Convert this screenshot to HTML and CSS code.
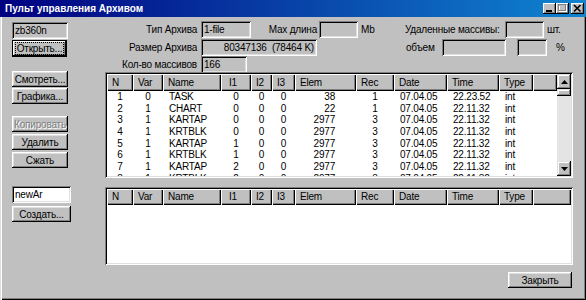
FILE: index.html
```html
<!DOCTYPE html>
<html lang="ru">
<head>
    <meta charset="UTF-8">
    <title>Пульт управления Архивом</title>
    <link rel="stylesheet" href="styles.css">
</head>
<body>
    <div class="window">
        <div class="titlebar">
            <span class="title">Пульт управления Архивом</span>
            <div class="caption-btns">
                <span class="cbtn"><svg width="13" height="11" viewBox="0 0 13 11"><rect x="3" y="7" width="6" height="2" fill="#000"/></svg></span>
                <span class="cbtn"><svg width="13" height="11" viewBox="0 0 13 11"><rect x="3.5" y="2.5" width="7" height="6" fill="none" stroke="#fff"/><rect x="2.5" y="1.5" width="7" height="6" fill="none" stroke="#808080"/><rect x="2" y="1" width="8" height="1.5" fill="#808080"/></svg></span>
                <span class="cbtn close"><svg width="13" height="11" viewBox="0 0 13 11"><path d="M3 2 L9.5 8.5 M9.5 2 L3 8.5" stroke="#000" stroke-width="1.6"/></svg></span>
            </div>
        </div>

        <div class="client">
            <div class="side">
                <div class="field w56">zb360n</div>
                <button class="btn default w55 mt1"><span class="focus">Открыть...</span></button>

                <button class="btn w56 mt14">Смотреть...</button>
                <button class="btn w56 mt1">Графика...</button>

                <button class="btn w56 mt12 disabled">Копировать</button>
                <button class="btn w56 mt2">Удалить</button>
                <button class="btn w56 mt2">Сжать</button>

                <div class="field edit w59 mt18">newAr</div>
                <button class="btn w59 mt3">Создать...</button>
            </div>

            <div class="main">
                <div class="info">
                    <div class="info-row">
                        <span class="lbl">Тип Архива</span>
                        <span class="field w50">1-file</span>
                        <span class="lbl lbl-max">Max длина</span>
                        <span class="field w39"></span>
                        <span class="unit unit-mb">Mb</span>
                        <span class="lbl-del">Удаленные массивы:</span>
                        <span class="field w39"></span>
                        <span class="unit">шт.</span>
                    </div>
                    <div class="info-row mt1">
                        <span class="lbl">Размер Архива</span>
                        <span class="field right w116">80347136 &nbsp;(78464 K)</span>
                        <span class="lbl-vol">объем</span>
                        <span class="field w64"></span>
                        <span class="field w30 gap11"></span>
                        <span class="unit pct">%</span>
                    </div>
                    <div class="info-row short">
                        <span class="lbl">Кол-во массивов</span>
                        <span class="field w46">166</span>
                    </div>
                </div>

                <div class="listbox upper">
                    <div class="gridview">
                        <div class="row head"><span>N</span><span>Var</span><span>Name</span><span>I1</span><span>I2</span><span>I3</span><span>Elem</span><span>Rec</span><span>Date</span><span>Time</span><span>Type</span><span></span></div>
                        <div class="row"><span>1</span><span>0</span><span>TASK</span><span>0</span><span>0</span><span>0</span><span>38</span><span>1</span><span>07.04.05</span><span>22.23.52</span><span>int</span><span></span></div>
                        <div class="row"><span>2</span><span>1</span><span>CHART</span><span>0</span><span>0</span><span>0</span><span>22</span><span>1</span><span>07.04.05</span><span>22.11.32</span><span>int</span><span></span></div>
                        <div class="row"><span>3</span><span>1</span><span>KARTAP</span><span>0</span><span>0</span><span>0</span><span>2977</span><span>3</span><span>07.04.05</span><span>22.11.32</span><span>int</span><span></span></div>
                        <div class="row"><span>4</span><span>1</span><span>KRTBLK</span><span>0</span><span>0</span><span>0</span><span>2977</span><span>3</span><span>07.04.05</span><span>22.11.32</span><span>int</span><span></span></div>
                        <div class="row"><span>5</span><span>1</span><span>KARTAP</span><span>1</span><span>0</span><span>0</span><span>2977</span><span>3</span><span>07.04.05</span><span>22.11.32</span><span>int</span><span></span></div>
                        <div class="row"><span>6</span><span>1</span><span>KRTBLK</span><span>1</span><span>0</span><span>0</span><span>2977</span><span>3</span><span>07.04.05</span><span>22.11.32</span><span>int</span><span></span></div>
                        <div class="row"><span>7</span><span>1</span><span>KARTAP</span><span>2</span><span>0</span><span>0</span><span>2977</span><span>3</span><span>07.04.05</span><span>22.11.32</span><span>int</span><span></span></div>
                        <div class="row"><span>8</span><span>1</span><span>KRTBLK</span><span>2</span><span>0</span><span>0</span><span>2977</span><span>3</span><span>07.04.05</span><span>22.11.32</span><span>int</span><span></span></div>
                    </div>
                    <div class="vscroll">
                        <div class="sbtn"><svg width="7" height="4" viewBox="0 0 7 4"><path d="M3.5 0 L7 4 L0 4 Z" fill="#000"/></svg></div>
                        <div class="thumb"></div>
                        <div class="track"></div>
                        <div class="sbtn"><svg width="7" height="4" viewBox="0 0 7 4"><path d="M0 0 L7 0 L3.5 4 Z" fill="#000"/></svg></div>
                    </div>
                </div>

                <div class="listbox lower">
                    <div class="gridview">
                        <div class="row head wide"><span>N</span><span>Var</span><span>Name</span><span>I1</span><span>I2</span><span>I3</span><span>Elem</span><span>Rec</span><span>Date</span><span>Time</span><span>Type</span><span></span></div>
                    </div>
                </div>

                <div class="footer">
                    <button class="btn w64">Закрыть</button>
                </div>
            </div>
        </div>
    </div>
</body>
</html>
```

FILE: styles.css
```css
body {
    margin: 0;
    background: #c0c0c0;
    font-family: "Liberation Sans", Arial, sans-serif;
    font-size: 10px;
    letter-spacing: -0.2px;
    color: #000;
}

/* window frame */
.window {
    width: 586px;
    height: 300px;
    box-sizing: border-box;
    background: #c0c0c0;
    box-shadow: inset 1px 0 #dfdfdf, inset 2px 0 #fff, inset -1px -1px #000, inset -2px -2px #808080;
    display: flex;
    flex-direction: column;
}
.titlebar {
    height: 17px;
    display: flex;
    align-items: center;
    justify-content: space-between;
    padding: 0 2px 0 5px;
    background: linear-gradient(90deg, #000080, #1084d0);
}
.title {
    color: #fff;
    font-weight: bold;
    letter-spacing: 0;
}
.caption-btns {
    display: flex;
}
.cbtn {
    width: 13px;
    height: 11px;
    display: flex;
    background: #c0c0c0;
    box-shadow: inset -1px -1px #000, inset 1px 1px #fff, inset -2px -2px #808080;
}
.cbtn.close {
    margin-left: 2px;
}

.client {
    flex: 1;
    display: flex;
    padding-left: 12px;
}

/* common controls */
.btn {
    height: 16px;
    padding: 0;
    border: none;
    background: #c0c0c0;
    font: inherit;
    letter-spacing: inherit;
    color: #000;
    display: flex;
    align-items: center;
    justify-content: center;
    box-shadow: inset -1px -1px #000, inset 1px 1px #fff, inset -2px -2px #808080, inset 2px 2px #dfdfdf;
}
.btn.default {
    height: 17px;
    box-shadow: inset 0 0 0 1px #000, inset -2px -2px #000, inset 2px 2px #fff, inset -3px -3px #808080;
}
.btn .focus {
    outline: 1px dotted #000;
    outline-offset: 0;
    padding: 0 1px;
    line-height: 11px;
}
.btn.disabled {
    color: #808080;
    text-shadow: 1px 1px #fff;
}
.field {
    height: 17px;
    box-sizing: border-box;
    padding: 0 3px;
    display: flex;
    align-items: center;
    white-space: nowrap;
    background: #c0c0c0;
    box-shadow: inset 1px 1px #808080, inset -1px -1px #fff, inset 2px 2px #000, inset -2px -2px #dfdfdf;
}
.field.edit {
    background: #fff;
}
.field.right {
    justify-content: flex-end;
}

.w30 { width: 30px; }
.w39 { width: 39px; }
.w46 { width: 46px; }
.w50 { width: 50px; }
.w55 { width: 55px; }
.w56 { width: 56px; }
.w59 { width: 59px; }
.w64 { width: 64px; }
.w116 { width: 116px; }
.mt1 { margin-top: 1px; }
.mt2 { margin-top: 2px; }
.mt3 { margin-top: 3px; }
.mt12 { margin-top: 12px; }
.mt14 { margin-top: 14px; }
.mt18 { margin-top: 18px; }

/* left column */
.side {
    width: 60px;
    display: flex;
    flex-direction: column;
    padding-top: 5px;
}

/* right column */
.main {
    width: 468px;
    margin-left: 33px;
    display: flex;
    flex-direction: column;
}
.info {
    padding-top: 4px;
    display: flex;
    flex-direction: column;
}
.info-row {
    height: 17px;
    display: flex;
    align-items: center;
}
.info-row.short {
    height: 16px;
}
.lbl {
    width: 92px;
    margin-right: 4px;
    text-align: right;
    white-space: nowrap;
}
.lbl-max {
    width: 50px;
    margin: 0 2px 0 16px;
}
.unit {
    margin-left: 3px;
}
.unit-mb {
    width: 44px;
}
.lbl-del {
    width: 100px;
    white-space: nowrap;
}
.lbl-vol {
    width: 36px;
    margin-left: 89px;
}
.gap11 {
    margin-left: 11px;
}
.pct {
    margin-left: 9px;
}

/* string grids */
.listbox {
    padding: 2px;
    display: flex;
    background: #fff;
    box-shadow: inset 1px 1px #808080, inset -1px -1px #fff, inset 2px 2px #000, inset -2px -2px #dfdfdf;
}
.listbox.upper {
    height: 106px;
    box-sizing: border-box;
}
.listbox.lower {
    height: 78px;
    box-sizing: border-box;
    margin-top: 9px;
}
.gridview {
    flex: 1;
    overflow: hidden;
}
.row {
    display: grid;
    grid-template-columns: 26px 30px 58px 30px 21px 23px 61px 38px 53px 52px 34px 24px;
    height: 11.67px;
    line-height: 11.67px;
    white-space: nowrap;
}
.row span {
    overflow: hidden;
}
.row span:nth-child(1),
.row span:nth-child(2),
.row span:nth-child(4),
.row span:nth-child(5),
.row span:nth-child(6),
.row span:nth-child(8) {
    text-align: center;
}
.row span:nth-child(3) {
    padding-left: 6px;
}
.row span:nth-child(7) {
    text-align: right;
    padding-right: 21px;
}
.row span:nth-child(9),
.row span:nth-child(10),
.row span:nth-child(11) {
    padding-left: 6px;
}
.row.head {
    height: 17px;
    line-height: 17px;
}
.row.head.wide {
    height: 16px;
    line-height: 16px;
    grid-template-columns: 26px 30px 58px 30px 21px 23px 61px 38px 53px 52px 34px 1fr;
}
.row.head span {
    text-align: left;
    padding: 0 0 0 5px;
    background: #c0c0c0;
    box-shadow: inset 1px 1px #fff, inset -1px -1px #000, inset -2px -2px #808080;
}
.row.head span:nth-child(4) {
    padding-left: 8px;
}

.vscroll {
    width: 14px;
    display: flex;
    flex-direction: column;
}
.sbtn {
    height: 15px;
    display: flex;
    align-items: center;
    justify-content: center;
    background: #c0c0c0;
    box-shadow: inset -1px -1px #000, inset 1px 1px #dfdfdf, inset -2px -2px #808080, inset 2px 2px #fff;
}
.thumb {
    height: 7px;
    background: #c0c0c0;
    box-shadow: inset -1px -1px #000, inset 1px 1px #dfdfdf, inset -2px -2px #808080, inset 2px 2px #fff;
}
.track {
    flex: 1;
    background: #e4e4e4;
}

.footer {
    display: flex;
    justify-content: flex-end;
    margin-top: 7px;
    padding-right: 1px;
}
```
